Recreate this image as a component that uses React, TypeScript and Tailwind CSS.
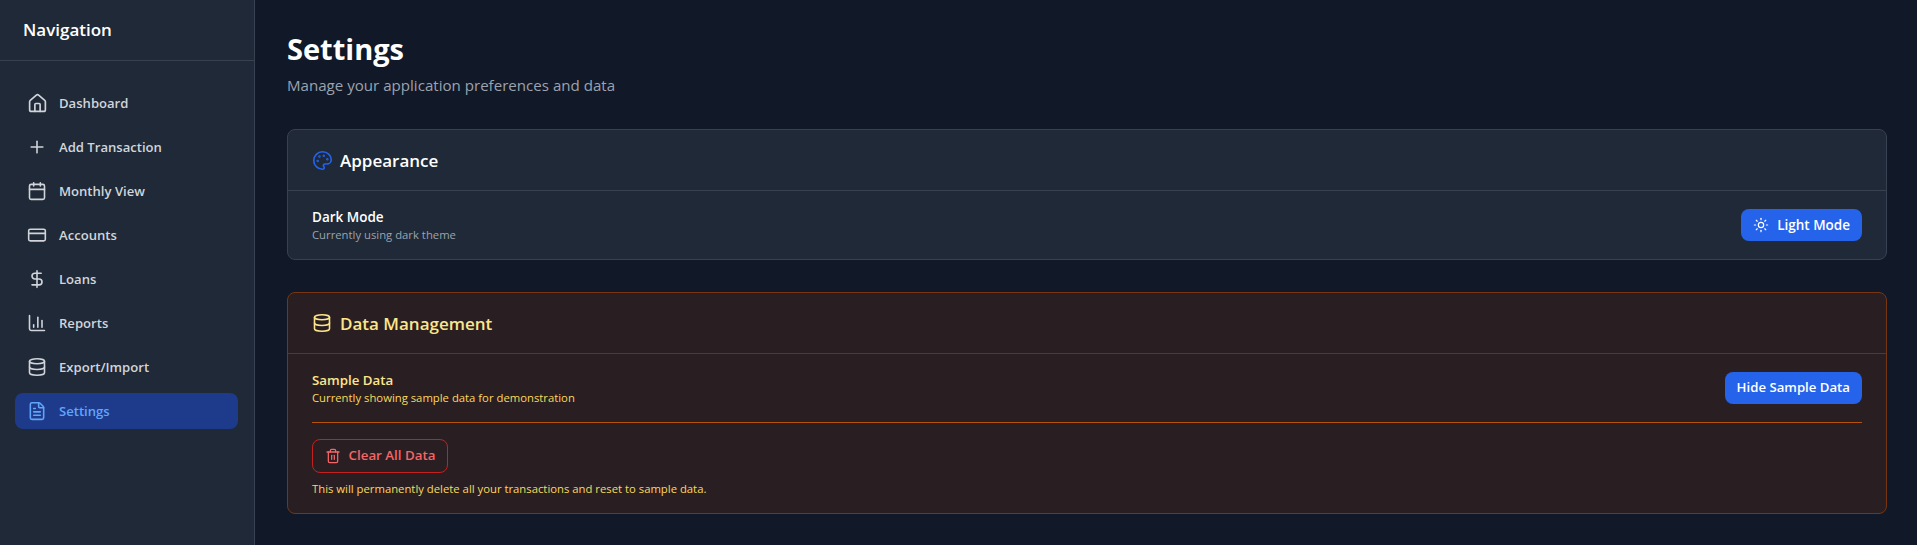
import { House, Plus, Calendar, CreditCard, DollarSign, ChartColumn, Database, FileText, Palette, Sun, Trash2 } from "lucide-react";

const items = [
  { label: "Dashboard", Icon: House, big: true },
  { label: "Add Transaction", Icon: Plus },
  { label: "Monthly View", Icon: Calendar },
  { label: "Accounts", Icon: CreditCard },
  { label: "Loans", Icon: DollarSign },
  { label: "Reports", Icon: ChartColumn },
  { label: "Export/Import", Icon: Database },
  { label: "Settings", Icon: FileText, active: true },
];

export default function App() {
  return (
    <div className="flex h-[545px] overflow-hidden bg-[#111827] font-['Open_Sans','Noto_Sans',sans-serif] text-white">
      <aside className="w-[255px] shrink-0 bg-[#1f2937] border-r border-[#374151]">
        <div className="h-[61px] border-b border-[#374151] pl-[23px] flex items-center pb-px">
          <h2 className="text-[17px] font-semibold">Navigation</h2>
        </div>
        <nav className="pl-[15px] pr-4 pt-6 flex flex-col gap-2">
          {items.map(({ label, Icon, active, big }) => (
            <div
              key={label}
              className={active
                ? "h-9 px-3 flex items-center gap-3 rounded-lg bg-[#1e3a8a] text-[#60a5fa]"
                : "h-9 px-3 flex items-center gap-3 rounded-lg text-[#d1d5db]"}
            >
              {big ? <Icon size={21} strokeWidth={1.9} className="-mx-[0.5px]" /> : <Icon size={20} strokeWidth={1.9} />}
              <span className="pt-px text-[13.1px] font-semibold">{label}</span>
            </div>
          ))}
        </nav>
      </aside>
      <main className="flex-1 pl-8 pt-[31px]">
        <div className="w-[1600px]">
          <h1 className="text-[29px] leading-9 font-bold">Settings</h1>
          <p className="mt-1.5 text-[15.1px] leading-6 text-[#9ca3af]">Manage your application preferences and data</p>

          <section className="mt-8 rounded-lg border border-[#374151] bg-[#1f2937]">
            <div className="h-[61px] border-b border-[#374151] px-6 flex items-center gap-2">
              <Palette size={21} strokeWidth={1.9} className="-mx-[0.5px] text-[#2563eb]" />
              <h3 className="pt-px text-[17px] font-semibold">Appearance</h3>
            </div>
            <div className="px-6 py-4 flex items-center justify-between">
              <div>
                <div className="text-[13.5px] leading-5 font-semibold">Dark Mode</div>
                <div className="text-[11.3px] leading-4 text-[#9ca3af]">Currently using dark theme</div>
              </div>
              <button className="h-8 px-3 rounded-lg bg-[#2563eb] flex items-center gap-2 text-[13.5px] font-semibold">
                <Sun size={16} strokeWidth={1.8} />
                Light Mode
              </button>
            </div>
          </section>

          <section className="mt-8 rounded-lg border border-[#78350f] bg-[#291f23]">
            <div className="h-[61px] border-b border-[#374151] px-6 flex items-center gap-2">
              <Database size={20} strokeWidth={1.9} className="text-[#fde68a]" />
              <h3 className="pt-px text-[17px] font-semibold text-[#fde68a]">Data Management</h3>
            </div>
            <div className="px-6 py-4">
              <div className="flex items-center justify-between pb-4 border-b border-[#b45309]">
                <div>
                  <div className="text-[13.3px] leading-5 font-semibold text-[#fde68a]">Sample Data</div>
                  <div className="text-[11.3px] leading-4 text-[#fcd85a]">Currently showing sample data for demonstration</div>
                </div>
                <button className="h-8 px-3 rounded-lg bg-[#2563eb] text-[13.2px] font-semibold">Hide Sample Data</button>
              </div>
              <button className="mt-4 h-[34px] w-[136px] rounded-lg border border-[#c42020] flex items-center justify-center gap-2 text-[13.3px] font-semibold text-[#f56565]">
                <Trash2 size={16} strokeWidth={1.9} />
                Clear All Data
              </button>
              <p className="mt-2 text-[11.3px] leading-4 text-[#fcd85a]">This will permanently delete all your transactions and reset to sample data.</p>
            </div>
          </section>
        </div>
      </main>
    </div>
  );
}
